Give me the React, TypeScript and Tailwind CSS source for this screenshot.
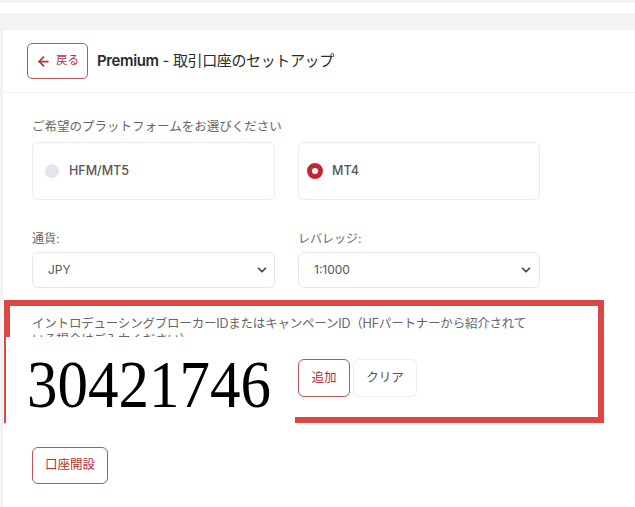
import { ArrowLeft, ChevronDown } from "lucide-react"

const font = "font-['Inter','Noto_Sans_CJK_JP',sans-serif]"

export default function App() {
    return (
        <div className={`relative w-[635px] h-[507px] overflow-hidden bg-white ${font}`}>

            {/* Barra superior */}
            <div className="h-[3px] bg-[#f3f3f3]" />
            <div className="h-[10px] bg-white" />

            {/* Fundo da página */}
            <div className="bg-[#f3f3f3] pt-[17px] pl-[3px] h-[494px]">

                <div className="bg-white h-full shadow-[0_0_2px_rgba(0,0,0,0.04)]">

                    {/* Cabeçalho */}
                    <div className="h-[63px] flex items-center gap-[9px] pl-[24px] border-b border-[#f0f0f0]">
                        <button className="w-[61px] h-[36px] rounded-[5px] border border-[#b9545b] flex items-center justify-center gap-[5px] text-[#b3323a] text-[11.5px]">
                            <ArrowLeft size={15} strokeWidth={2.8} />
                            <span>戻る</span>
                        </button>
                        <h1 className="text-[15px] text-[#2b2b2b] tracking-tight">
                            <span className="font-semibold">Premium</span> - 取引口座のセットアップ
                        </h1>
                    </div>

                    {/* Formulário */}
                    <div className="pl-[29px] pt-[25px] w-[540px]">

                        <p className="text-[12.5px] text-[#666] leading-[18px] mb-[6px]">ご希望のプラットフォームをお選びください</p>

                        <div className="grid grid-cols-[243px_242px] gap-[23px]">
                            <div className="h-[58px] rounded-[6px] border border-[#ececec] flex items-center pl-[12px] gap-[10px]">
                                <span className="w-[14px] h-[14px] rounded-full bg-[#e4e5ec]" />
                                <span className="text-[12.5px] font-medium text-[#555]">HFM/MT5</span>
                            </div>
                            <div className="h-[58px] rounded-[6px] border border-[#ececec] flex items-center pl-[8px] gap-[9px]">
                                <span className="w-[16px] h-[16px] rounded-full border-[5px] border-[#c1282e] bg-white" />
                                <span className="text-[12.5px] font-medium text-[#555]">MT4</span>
                            </div>
                        </div>

                        <div className="grid grid-cols-[243px_242px] gap-x-[23px] mt-[30px]">
                            <div className="flex flex-col gap-[4px]">
                                <label className="text-[12px] text-[#666] leading-[18px]">通貨:</label>
                                <div className="h-[36px] rounded-[6px] border border-[#e6e6ee] flex items-center justify-between pl-[15px] pr-[5px]">
                                    <span className="text-[12px] text-[#555]">JPY</span>
                                    <ChevronDown size={14} strokeWidth={3} className="text-[#444]" />
                                </div>
                            </div>
                            <div className="flex flex-col gap-[4px]">
                                <label className="text-[12px] text-[#666] leading-[18px]">レバレッジ:</label>
                                <div className="h-[36px] rounded-[6px] border border-[#e6e6ee] flex items-center justify-between pl-[15px] pr-[6px]">
                                    <span className="text-[12px] text-[#555]">1:1000</span>
                                    <ChevronDown size={14} strokeWidth={3} className="text-[#444]" />
                                </div>
                            </div>
                        </div>

                        {/* IB / Campanha */}
                        <p className="mt-[28px] text-[12.5px] text-[#666] leading-[16px] w-[503px] tracking-[-0.2px]">
                            イントロデューシングブローカーIDまたはキャンペーンID（HFパートナーから紹介されている場合はご入力ください）
                        </p>

                        <div className="grid grid-cols-[243px_auto] gap-x-[23px] mt-[11px]">
                            <div className="h-[38px] rounded-[6px] border border-[#e6e6ee]" />
                            <div className="flex gap-[3px]">
                                <button className="w-[52px] h-[38px] rounded-[6px] border border-[#b9545b] text-[12.5px] text-[#b3323a]">追加</button>
                                <button className="w-[64px] h-[38px] rounded-[6px] border border-[#eeeeee] text-[12.5px] text-[#555]">クリア</button>
                            </div>
                        </div>

                        <button className="mt-[50px] w-[76px] h-[37px] rounded-[6px] border border-[#b9545b] text-[12.5px] text-[#b3323a]">口座開設</button>
                    </div>
                </div>
            </div>

            {/* Marcação vermelha */}
            <div className="absolute left-[4px] top-[300px] w-[600px] h-[123px] border-[6px] border-[#dd4644]" />

            {/* Sobreposição com o número */}
            <div className="absolute left-[6px] top-[337px] w-[289px] h-[90px] bg-white flex items-center pl-[21px] pt-[4px]">
                <span className="font-['Liberation_Serif',serif] text-[61px] leading-none text-black scale-y-[1.12]">30421746</span>
            </div>
        </div>
    )
}
